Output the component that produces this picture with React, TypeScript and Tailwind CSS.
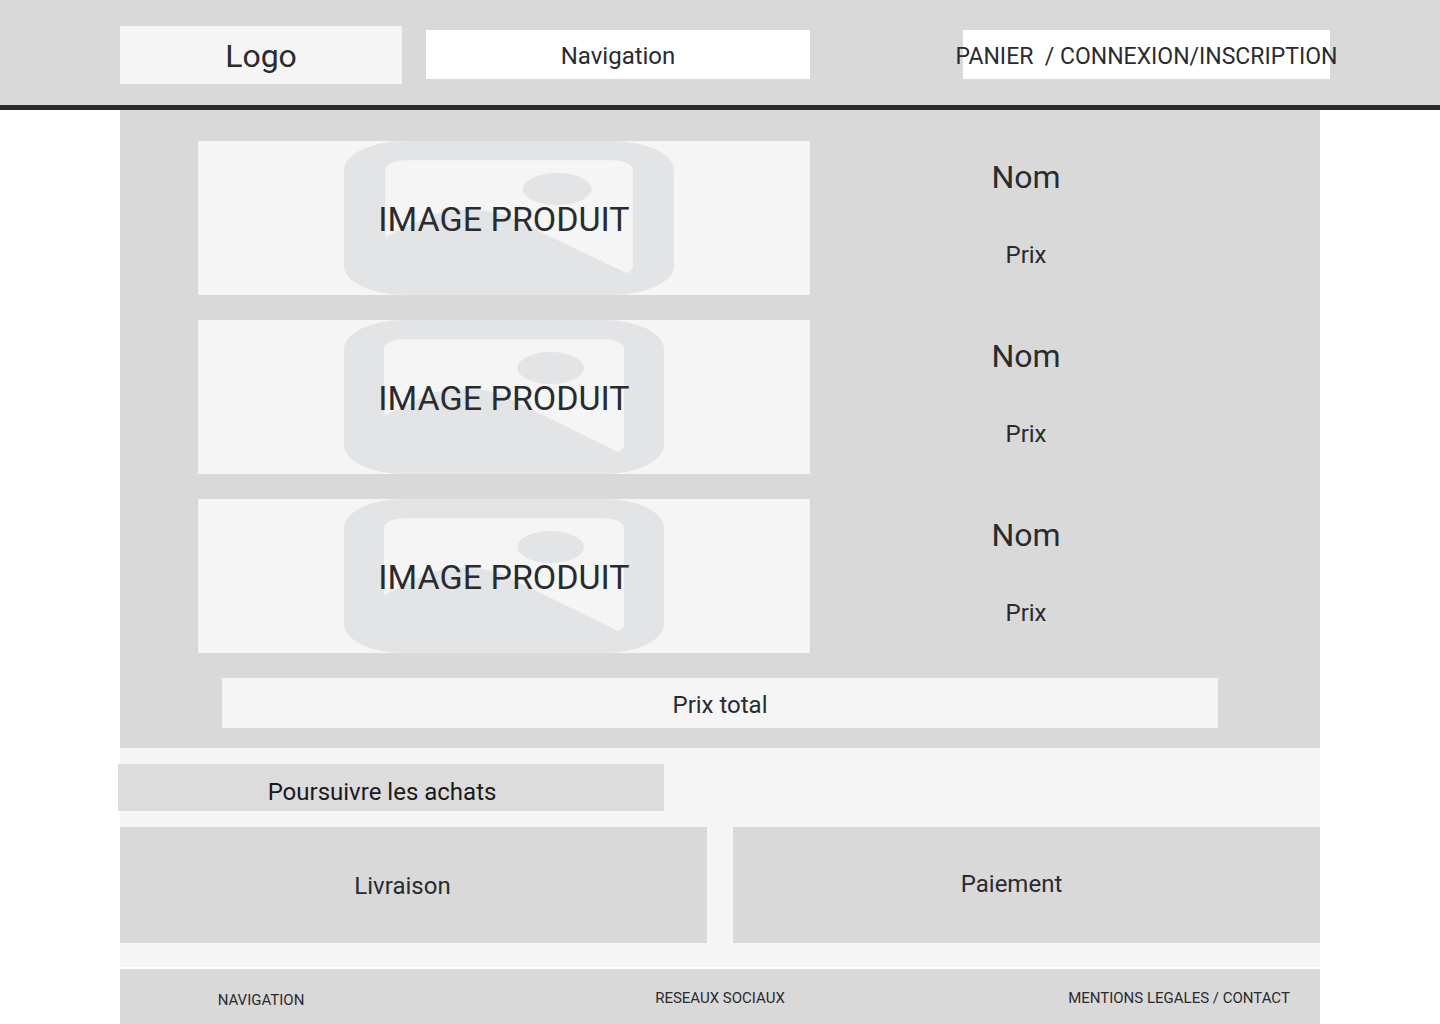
import React from "react";

const products = [
  { id: 1, imageClass: "w-[330px]" },
  { id: 2, imageClass: "w-[320px]" },
  { id: 3, imageClass: "w-[320px]" },
];

function PicturePlaceholder({ className }: { className: string }) {
  return (
    <svg
      viewBox="0 0 320 154"
      preserveAspectRatio="none"
      className={`absolute inset-y-0 left-[146px] h-full ${className}`}
      aria-hidden="true"
    >
      <rect width="320" height="154" rx="60" ry="29" fill="#e3e4e6" />
      <path
        d="M40 96V28.9C40 23.6 49 19.25 60 19.25H260C271 19.25 280 23.6 280 28.9V125C280 128 277.500 131 274 132L162 77C142 66 100 66 80 76.500Z"
        fill="#f5f5f5"
      />
      <ellipse cx="206.7" cy="48" rx="33.4" ry="16" fill="#e3e4e6" />
    </svg>
  );
}

function Product({ imageClass }: { imageClass: string }) {
  return (
    <li className="grid grid-cols-[612fr_432fr]">
      <div className="relative flex h-[154px] items-center justify-center bg-[#f5f5f5]">
        <PicturePlaceholder className={imageClass} />
        <span className="relative pt-0.5 text-[34px] whitespace-nowrap">IMAGE PRODUIT</span>
      </div>
      <div className="flex flex-col items-center pt-3.5">
        <h2 className="text-[32px]/[44px]">Nom</h2>
        <p className="mt-10">Prix</p>
      </div>
    </li>
  );
}

export default function App() {
  return (
    <div className="min-h-screen bg-white font-['Roboto',sans-serif] text-2xl/8 text-[#2a2b2f]">
      <header className="border-b-[5px] border-[#2a2b2f] bg-[#d9d9d9]">
        <div className="mx-auto flex max-w-[1440px] items-center pt-[26px] pr-[110px] pb-[21px] pl-[120px]">
          <a href="#" className="flex h-[58px] flex-[282] items-center justify-center bg-[#f5f5f5] pt-0.5 text-[32px]">
            Logo
          </a>
          <nav className="mb-px ml-6 flex h-[49px] flex-[384] items-center justify-center bg-white pt-0.5">
            <a href="#">Navigation</a>
          </nav>
          <div className="mb-px ml-[153px] flex h-[49px] min-w-0 flex-[367] items-center justify-center bg-white pt-1">
            <a href="#" className="text-[23px] whitespace-pre">{"PANIER  / CONNEXION/INSCRIPTION"}</a>
          </div>
        </div>
      </header>

      <main className="mx-auto max-w-[1200px] bg-[#f5f5f5] pb-6">
        <section className="bg-[#d9d9d9] px-[78px] pt-[31px] pb-5">
          <ul className="flex flex-col gap-[25px]">
            {products.map((product) => (
              <Product key={product.id} imageClass={product.imageClass} />
            ))}
          </ul>
          <p className="mx-6 mt-[25px] flex h-[50px] items-center justify-center bg-[#f5f5f5] pt-1">
            Prix total
          </p>
        </section>

        <button
          type="button"
          className="mt-4 -ml-0.5 flex h-[47px] w-[546px] items-center justify-center bg-[#dcdcdc] pt-2 pr-[18px] text-[#1a1a1c]"
        >
          Poursuivre les achats
        </button>

        <div className="mt-4 grid grid-cols-2 gap-[26px]">
          <button type="button" className="flex h-[116px] items-center justify-center bg-[#d9d9d9] pt-0.5 pr-[22px]">
            Livraison
          </button>
          <button type="button" className="flex h-[116px] items-center justify-center bg-[#d9d9d9] pr-[30px] pb-0.5">
            Paiement
          </button>
        </div>
      </main>

      <footer className="mx-auto mt-0.5 grid h-[55px] max-w-[1200px] grid-cols-[282fr_636fr_282fr] items-center bg-[#d9d9d9] text-center text-[15px]/6">
        <a href="#" className="pt-1.5">NAVIGATION</a>
        <a href="#" className="pt-0.5">RESEAUX SOCIAUX</a>
        <a href="#" className="pt-0.5 whitespace-nowrap">MENTIONS LEGALES / CONTACT</a>
      </footer>
    </div>
  );
}
